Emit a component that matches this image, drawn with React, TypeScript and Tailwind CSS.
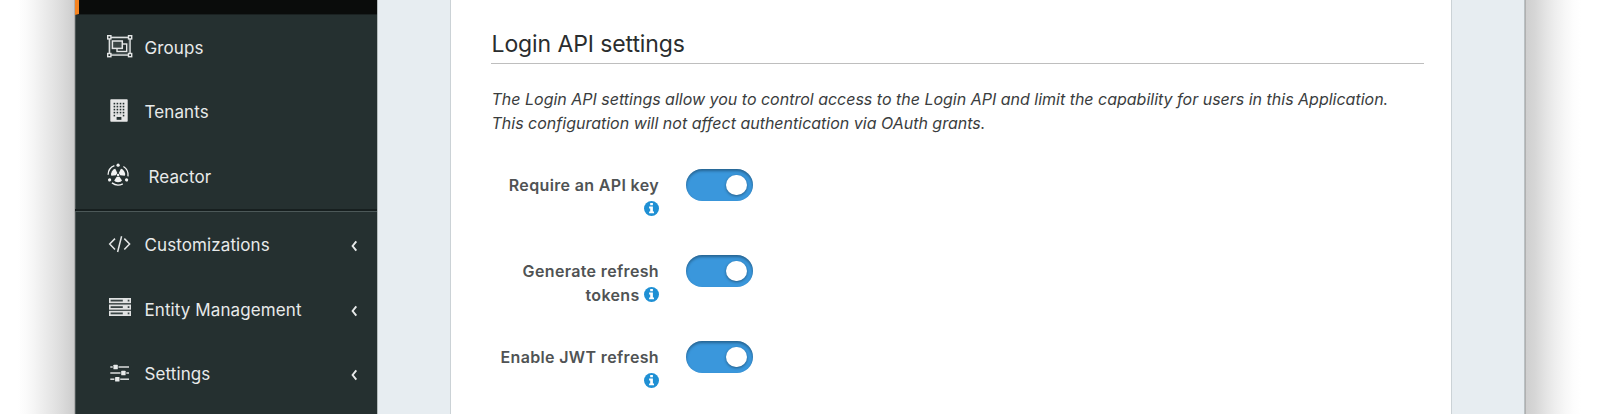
import type { ReactNode } from "react";

const ICON = "w-[36px] h-full shrink-0";

function GroupsIcon() {
  return (
    <svg className={ICON} viewBox="103 15 36 64" fill="none" stroke="#e4e6e6">
      <rect x="109.3" y="37.3" width="20.8" height="17.8" fill="#56605f" strokeWidth="1.3" />
      <rect x="111" y="39" width="17.4" height="14.4" fill="#253030" stroke="none" />
      <rect x="117" y="44" width="9.7" height="7.5" strokeWidth="1.4" />
      <rect x="112.4" y="41" width="9.9" height="7.4" fill="#3b4645" strokeWidth="1.5" />
      {[[109.3, 37.3], [130.1, 37.3], [109.3, 55.1], [130.1, 55.1]].map(([x, y]) => (
        <rect key={`${x}-${y}`} x={x - 1.6} y={y - 1.6} width="3.2" height="3.2" fill="#253030" strokeWidth="1.4" />
      ))}
    </svg>
  );
}

function TenantsIcon() {
  return (
    <svg className={ICON} viewBox="103 79 36 65">
      <rect x="110.3" y="99.3" width="17.4" height="22.4" rx="0.8" fill="#e6e6e6" />
      {[103.6, 106.6, 109.6, 112.6, 115.6].map((y) =>
        [114.4, 117.4, 120.5, 123.5].map((x) => (
          <rect key={`${x}-${y}`} x={x - 0.8} y={y - 0.8} width="1.6" height="1.6" fill="#253030" />
        )),
      )}
      <rect x="115.4" y="114.8" width="7" height="2" fill="#e6e6e6" />
      <rect x="116.6" y="117" width="4.8" height="2.8" fill="#253030" />
    </svg>
  );
}

function ReactorIcon() {
  return (
    <svg className={ICON} viewBox="103 144 36 65" fill="#f2f3f3">
      {[0, 120, 240].map((a) => (
        <g key={a} transform={`rotate(${a} 118.1 175)`}>
          <circle cx="118.1" cy="165.2" r="1.6" />
          <path d="M123.4 166.5 A10 10 0 0 1 128 176.4" fill="none" stroke="#f2f3f3" strokeWidth="1.3" />
          <path d="M116.7 176.7 L119.5 176.7 L122 180.5 Q121.2 182.2 118.1 182.2 Q115 182.2 114.2 180.5 Z" />
        </g>
      ))}
      <circle cx="118.1" cy="175" r="1.2" />
    </svg>
  );
}

function CodeIcon() {
  return (
    <svg className={ICON} viewBox="103 212 36 65" fill="none" stroke="#e4e6e6" strokeWidth="1.5">
      <path d="M115 238.6 L109.7 244 L115 249.5 M124.3 238.6 L129.6 244 L124.3 249.5 M121.6 236.3 L117.6 252" />
    </svg>
  );
}

function ServerIcon() {
  return (
    <svg className={ICON} viewBox="103 277 36 65">
      {[298, 304.5, 310.8].map((y) => (
        <g key={y}>
          <rect x="109" y={y} width="22" height="5.2" fill="#e0e2e2" />
          <rect x="110.6" y={y + 1.7} width="12.2" height="1.8" fill="#3a4545" />
          <rect x="127.7" y={y + 1.7} width="1.7" height="1.8" fill="#3a4545" />
        </g>
      ))}
    </svg>
  );
}

function SlidersIcon() {
  return (
    <svg className={ICON} viewBox="103 342 36 63" fill="#e8eaea">
      {[[367, 115.6], [373, 123.4], [379.2, 117.3]].map(([y, x]) => (
        <g key={y}>
          <rect x="110.3" y={y - 0.7} width="18.7" height="1.4" />
          <rect x={x - 2.9} y={y - 2.3} width="5.8" height="4.6" fill="#253030" />
          <rect x={x - 2.2} y={y - 2.3} width="4.4" height="4.6" rx="0.6" />
        </g>
      ))}
    </svg>
  );
}

function NavItem({ icon, label, height, gap = "pl-[5.5px]", expandable = false }: {
  icon: ReactNode;
  label: string;
  height: string;
  gap?: string;
  expandable?: boolean;
}) {
  return (
    <a className={`flex items-center pl-7 pr-[19.5px] ${height}`}>
      {icon}
      <span className={`grow pt-px text-[17px] leading-6 tracking-[0.1px] text-[#e8eaea] ${gap}`}>{label}</span>
      {expandable && (
        <svg className="mt-[3px] h-3 w-2 shrink-0" viewBox="0 0 8 12" fill="none" stroke="#e8eaea" strokeWidth="1.9">
          <path d="M6.3 1.4 L2.6 6 L6.3 10.6" />
        </svg>
      )}
    </a>
  );
}

function Sidebar() {
  return (
    <nav className="w-[303px] shrink-0 border-r border-[#b4bcbd] bg-[#253030] shadow-[inset_1px_0_0_#4c5555]">
      <div className="h-[15px] border-b border-l-4 border-b-[#1a2121] border-l-[#f58320] bg-[#0a0c0b]" />
      <NavItem icon={<GroupsIcon />} label="Groups" height="h-[64px]" />
      <NavItem icon={<TenantsIcon />} label="Tenants" height="h-[65px]" />
      <NavItem icon={<ReactorIcon />} label="Reactor" height="h-[65px]" gap="pl-[9.5px]" />
      <div className="h-[3px] border-b border-[#4c5858] bg-[#171f1f]" />
      <NavItem icon={<CodeIcon />} label="Customizations" height="h-[65px]" expandable />
      <NavItem icon={<ServerIcon />} label="Entity Management" height="h-[65px]" expandable />
      <NavItem icon={<SlidersIcon />} label="Settings" height="h-[63px]" expandable />
    </nav>
  );
}

function InfoIcon() {
  return (
    <svg className="inline-block size-[15px] align-[-1px]" viewBox="0 0 15 15">
      <circle cx="7.5" cy="7.5" r="7.5" fill="#1f90d4" />
      <path d="M6.2 2h2.7v2.2H6.2z M5.1 5.6h3.8v4.9h1.1v1.8H5.1v-1.8h1.1V7.4H5.1z" fill="#fff" />
    </svg>
  );
}

function Setting({ lines }: { lines: ReactNode[] }) {
  return (
    <div className="flex h-[86px]">
      <div className="mr-[27px] w-[168px] pt-1 text-right text-[16px] font-semibold leading-6 tracking-[0.35px] text-[#505354]">
        {lines.map((line, i) => (
          <div key={i} className="h-6 whitespace-nowrap">{line}</div>
        ))}
      </div>
      <div className="flex h-8 w-[67px] items-center justify-end rounded-full bg-[#3a97dc] pr-[6.5px] shadow-[inset_0_2px_3px_rgba(0,0,0,0.35)]">
        <div className="size-[20.5px] rounded-full bg-white shadow-[0_1px_3px_rgba(0,0,0,0.4)]" />
      </div>
    </div>
  );
}

export default function App() {
  return (
    <div className="flex h-[414px] w-[1600px] overflow-hidden bg-white font-['Inter','Liberation_Sans',sans-serif]">
      <div className="w-[75px] shrink-0 bg-[linear-gradient(to_right,#fff_18px,#fbfbfb_26px,#f5f5f5_34px,#ededed_43px,#e4e4e4_53px,#dadada_63px,#cdcdcd_74px,#b0b0b0_74px)]" />
      <Sidebar />
      <main className="flex w-[1147px] shrink-0 border-r border-[#b9c0c3] bg-[#e7edf1] pl-[72px]">
        <section className="w-[1002px] border-x border-[#cbd2d6] bg-white pl-[40px] pr-[27px] pt-[30px]">
          <h2 className="h-[34px] border-b border-[#bebebe] pl-[0.5px] text-[23px] leading-[29px] tracking-[-0.1px] text-[#2a2d2e]">Login API settings</h2>
          <p className="mt-[23px] whitespace-nowrap pl-[0.5px] text-[16px] italic leading-6 tracking-[-0.005px] text-[#3a3d3e]">
            The Login API settings allow you to control access to the Login API and limit the capability for users in this Application.
            <br />
            This configuration will not affect authentication via OAuth grants.
          </p>
          <div className="mt-[34px]">
            <Setting lines={["Require an API key", <InfoIcon key="i" />]} />
            <Setting lines={["Generate refresh", <span key="t">tokens <InfoIcon /></span>]} />
            <Setting lines={["Enable JWT refresh", <InfoIcon key="i" />]} />
          </div>
        </section>
      </main>
      <div className="grow bg-[linear-gradient(to_right,#b0b0b0_1px,#cfcfcf_1px,#d6d6d6_10px,#e3e3e3_20px,#eeeeee_30px,#f7f7f7_40px,#fdfdfd_49px,#fff_56px)]" />
    </div>
  );
}
